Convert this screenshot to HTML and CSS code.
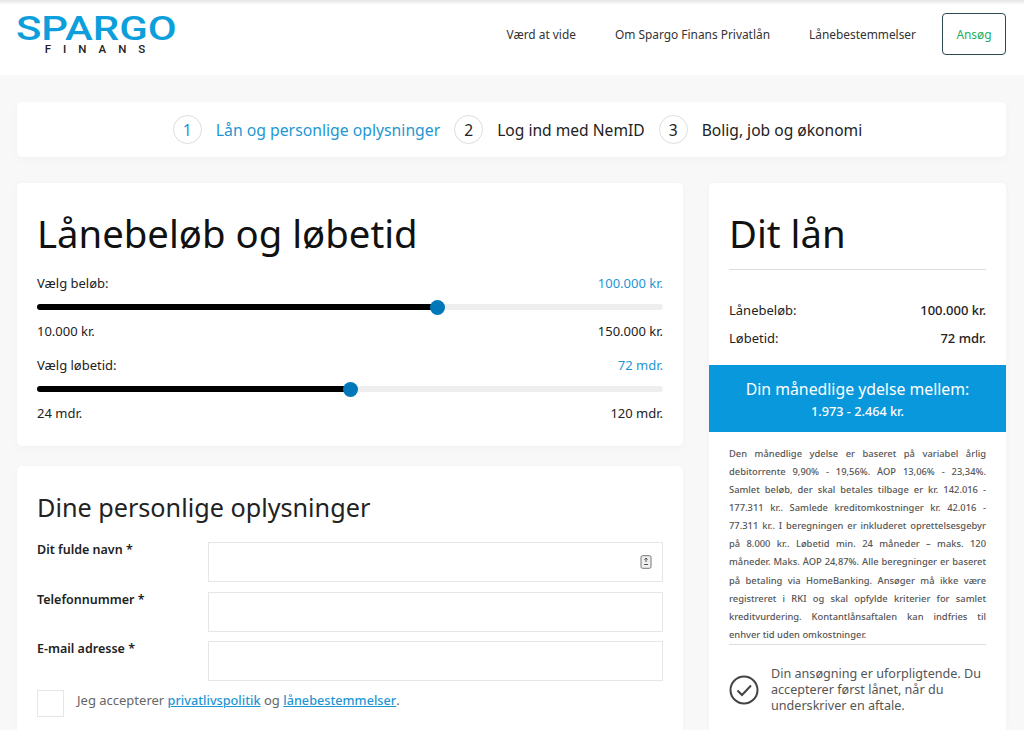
FILE: index.html
```html
<!DOCTYPE html>
<html lang="da">
<head>
  <meta charset="UTF-8" />
  <meta name="viewport" content="width=device-width, initial-scale=1.0"/>
  <title>Spargo Finans</title>
  <link rel="stylesheet" href="styles.css">
</head>
<body>
  <div class="navbar">
    <a class="logo" href="#">
      <span class="logo-main">SPARGO</span>
      <span class="logo-sub">FINANS</span>
    </a>
    <div class="nav-links">
      <a href="#">Værd at vide</a>
      <a href="#">Om Spargo Finans Privatlån</a>
      <a href="#">Lånebestemmelser</a>
      <a class="apply-btn" href="#">Ansøg</a>
    </div>
  </div>

  <div class="container">
    <div class="steps card">
      <div class="step active"><span class="step-num">1</span><span>Lån og personlige oplysninger</span></div>
      <div class="step"><span class="step-num">2</span><span>Log ind med NemID</span></div>
      <div class="step"><span class="step-num">3</span><span>Bolig, job og økonomi</span></div>
    </div>

    <div class="columns">
      <div class="main-col">
        <div class="card loan-card">
          <h1>Lånebeløb og løbetid</h1>
          <div class="slider-head"><span>Vælg beløb:</span><span class="value">100.000 kr.</span></div>
          <div class="slider"><div class="slider-fill fill-amount"></div><div class="slider-thumb"></div></div>
          <div class="slider-range"><span>10.000 kr.</span><span>150.000 kr.</span></div>
          <div class="slider-head second"><span>Vælg løbetid:</span><span class="value">72 mdr.</span></div>
          <div class="slider"><div class="slider-fill fill-term"></div><div class="slider-thumb"></div></div>
          <div class="slider-range"><span>24 mdr.</span><span>120 mdr.</span></div>
        </div>

        <div class="card form-card">
          <h2>Dine personlige oplysninger</h2>
          <div class="form-row">
            <label>Dit fulde navn *</label>
            <div class="input-box">
              <svg class="key-icon" width="12" height="14" viewBox="0 0 12 14">
                <rect x="1" y="0.7" width="10" height="12.6" rx="1.5" fill="#eee" stroke="#777"/>
                <path d="M6 3v4M4.4 4.6L6 3l1.6 1.6M4 9.5h4" fill="none" stroke="#555"/>
              </svg>
            </div>
          </div>
          <div class="form-row">
            <label>Telefonnummer *</label>
            <div class="input-box"></div>
          </div>
          <div class="form-row">
            <label>E-mail adresse *</label>
            <div class="input-box"></div>
          </div>
          <div class="accept-row">
            <span class="checkbox"></span>
            <span>Jeg accepterer <a href="#">privatlivspolitik</a> og <a href="#">lånebestemmelser</a>.</span>
          </div>
        </div>
      </div>

      <div class="card side-card">
        <h1>Dit lån</h1>
        <div class="side-rows">
          <div class="side-row"><span>Lånebeløb:</span><span class="side-val">100.000 kr.</span></div>
          <div class="side-row"><span>Løbetid:</span><span class="side-val">72 mdr.</span></div>
        </div>
        <div class="monthly">
          <div class="monthly-title">Din månedlige ydelse mellem:</div>
          <div class="monthly-value">1.973 - 2.464 kr.</div>
        </div>
        <p class="terms">Den månedlige ydelse er baseret på variabel årlig debitorrente 9,90% - 19,56%. ÅOP 13,06% - 23,34%. Samlet beløb, der skal betales tilbage er kr. 142.016 - 177.311 kr.. Samlede kreditomkostninger kr. 42.016 - 77.311 kr.. I beregningen er inkluderet oprettelsesgebyr på 8.000 kr.. Løbetid min. 24 måneder – maks. 120 måneder. Maks. ÅOP 24,87%. Alle beregninger er baseret på betaling via HomeBanking. Ansøger må ikke være registreret i RKI og skal opfylde kriterier for samlet kreditvurdering. Kontantlånsaftalen kan indfries til enhver tid uden omkostninger.</p>
        <div class="notice">
          <svg width="30" height="30" viewBox="0 0 30 30">
            <circle cx="15" cy="15" r="13.5" fill="none" stroke="#444" stroke-width="2"/>
            <path d="M8.5 15.5l4.5 4.5 9-9.5" fill="none" stroke="#444" stroke-width="2"/>
          </svg>
          <span>Din ansøgning er uforpligtende. Du accepterer først lånet, når du underskriver en aftale.</span>
        </div>
      </div>
    </div>
  </div>
</body>
</html>
```

FILE: styles.css
```css
html, body {
  height: 730px;
  overflow: hidden;
}

body {
  margin: 0;
  font-family: "Noto Sans", "Open Sans", sans-serif;
  background: #f8f8f8;
  color: #222;
}

a {
  text-decoration: none;
  color: inherit;
}

.navbar {
  height: 75px;
  box-sizing: border-box;
  background: linear-gradient(to bottom, #e4e4e4, #fff 5px);
  display: flex;
  justify-content: space-between;
  align-items: center;
  padding: 0 18px 7px 17px;
}

.logo {
  display: flex;
  flex-direction: column;
  align-items: center;
  width: 158px;
  margin-top: 2px;
}

.logo-main {
  font-family: Roboto, sans-serif;
  font-weight: 500;
  font-size: 32.5px;
  line-height: 27px;
  color: #0d9fdc;
  transform: scaleX(1.29);
}

.logo-sub {
  font-family: Roboto, sans-serif;
  font-weight: 500;
  font-size: 11.5px;
  line-height: 12px;
  letter-spacing: 12px;
  margin-right: -10px;
  color: #222;
}

.nav-links {
  display: flex;
  align-items: center;
  gap: 39px;
  font-size: 11.9px;
  color: #333;
}

.apply-btn {
  width: 64px;
  height: 42px;
  box-sizing: border-box;
  margin-left: -13px;
  border: 1px solid #2c4a52;
  border-radius: 4px;
  display: flex;
  justify-content: center;
  align-items: center;
  color: #27ae60;
}

.container {
  padding: 27px 18px 0 17px;
}

.card {
  background: white;
  border-radius: 5px;
  box-shadow: 0 2px 8px rgba(0, 0, 0, 0.03);
}

.steps {
  height: 55px;
  box-sizing: border-box;
  padding-left: 12px;
  display: flex;
  justify-content: center;
  align-items: center;
  gap: 14px;
  font-size: 15.6px;
  margin-bottom: 26px;
}

.step {
  display: flex;
  align-items: center;
  gap: 14px;
}

.step-num {
  width: 29px;
  height: 29px;
  box-sizing: border-box;
  border: 1px solid #ddd;
  border-radius: 50%;
  display: flex;
  justify-content: center;
  align-items: center;
}

.step.active {
  color: #1e96d2;
  font-size: 15.75px;
}

.columns {
  display: flex;
  gap: 26px;
  align-items: flex-start;
}

.main-col {
  width: 666px;
  display: flex;
  flex-direction: column;
  gap: 20px;
}

h1 {
  font-size: 38.3px;
  font-weight: 400;
  line-height: 48px;
  margin: 0;
  color: #111;
}

.loan-card {
  height: 263px;
  box-sizing: border-box;
  padding: 26px 20px 0;
}

.slider-head, .slider-range {
  display: flex;
  justify-content: space-between;
  font-size: 13px;
  line-height: 18px;
}

.slider-head {
  margin-top: 17px;
}

.slider-head.second {
  margin-top: 16px;
}

.value {
  color: #1e96d2;
}

.slider {
  height: 6px;
  margin: 12px 0;
  background: #eee;
  border-radius: 3px;
  display: flex;
  align-items: center;
}

.slider-fill {
  height: 100%;
  background: black;
  border-radius: 3px;
}

.fill-amount {
  width: 64%;
}

.fill-term {
  width: 50%;
}

.slider-thumb {
  width: 15px;
  height: 15px;
  margin-left: -7.5px;
  background: #0077b8;
  border-radius: 50%;
}

.form-card {
  height: 264px;
  box-sizing: border-box;
  padding: 23px 20px 0;
  border-radius: 5px 5px 0 0;
}

h2 {
  font-size: 25.2px;
  font-weight: 400;
  line-height: 36px;
  margin: 0 0 17px;
  color: #222;
}

.form-row {
  display: flex;
  margin-bottom: 9.5px;
}

.form-row label {
  width: 171px;
  font-size: 12.5px;
  font-weight: 600;
  line-height: 15px;
}

.input-box {
  flex: 1;
  height: 40px;
  box-sizing: border-box;
  border: 1px solid #e6e6e6;
  display: flex;
  justify-content: flex-end;
  align-items: center;
  padding-right: 10px;
}

.accept-row {
  display: flex;
  align-items: flex-start;
  gap: 13px;
  margin-top: -1px;
  font-size: 13px;
  line-height: 20px;
  color: #666;
}

.checkbox {
  width: 27px;
  height: 27px;
  box-sizing: border-box;
  border: 1px solid #e6e6e6;
}

.accept-row a {
  color: #1e96d2;
  text-decoration: underline;
  font-size: 12.7px;
  font-weight: 500;
}

.side-card {
  width: 297px;
  height: 547px;
  box-sizing: border-box;
  padding: 26px 20px 0;
  border-radius: 5px 5px 0 0;
}

.side-rows {
  border-top: 1px solid #ddd;
  margin-top: 12px;
  padding-top: 26px;
}

.side-row {
  display: flex;
  justify-content: space-between;
  font-size: 13px;
  line-height: 28px;
}

.side-val {
  font-weight: 500;
}

.monthly {
  margin: 13px -20px 0;
  height: 67px;
  background: #0a98dc;
  color: white;
  display: flex;
  flex-direction: column;
  justify-content: center;
  align-items: center;
  gap: 2px;
}

.monthly-title {
  font-size: 15.8px;
}

.monthly-value {
  font-size: 12.7px;
  font-weight: 500;
}

.terms {
  margin: 12.5px 0 0;
  font-size: 9.35px;
  font-weight: 500;
  line-height: 18.15px;
  text-align: justify;
  color: #555;
  border-bottom: 1px solid #ddd;
}

.notice {
  display: flex;
  align-items: center;
  gap: 12px;
  margin-top: 21px;
  font-size: 12.6px;
  line-height: 16px;
  color: #555;
}

.notice svg {
  flex: none;
}
```
